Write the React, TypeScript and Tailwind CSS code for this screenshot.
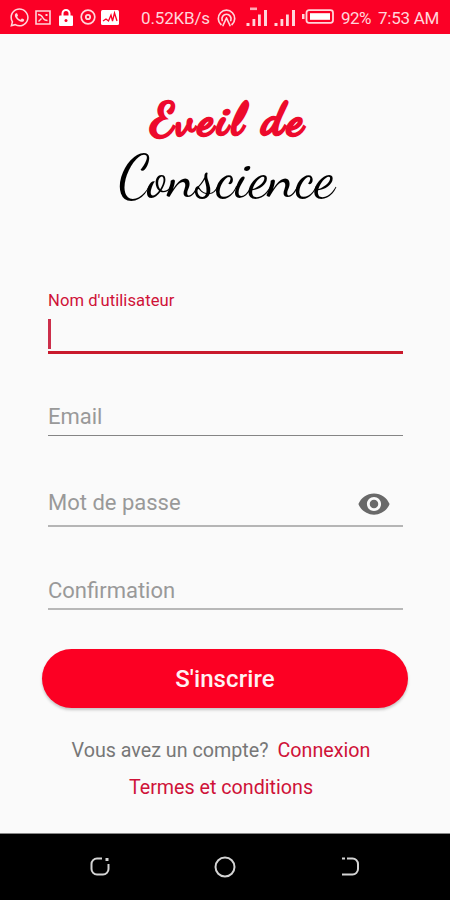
import { useState } from "react";
import { MdVisibility } from "react-icons/md";
import { FaWhatsapp } from "react-icons/fa";

const RED = "text-[#cf1238]";

function Signal({ label }: { label?: boolean }) {
  return (
    <svg width="22" height="20" viewBox="0 0 22 20" fill="currentColor">
      {label && <path d="M4 1.5h7v2.6H4z" opacity=".8" />}
      <path d="M.5 17h3v3h-3zM6.5 13h2.8v7H6.5zM12 8.5h2.8V20H12zM18 4h3v16h-3z" />
    </svg>
  );
}

function StatusBar() {
  return (
    <header className="flex h-[34px] shrink-0 items-center bg-[#fb0026] pl-[9px] text-[17px] text-[#ffd5da]">
      <FaWhatsapp className="size-[21px]" />
      <svg className="ml-[5px]" width="16" height="15" viewBox="0 0 16 15" fill="none" stroke="currentColor" strokeWidth="1.6">
        <path d="M1 1h14v13H1z" />
        <path d="M3 4.5c3.5 0 4 1.5 5 3.5s2 2.5 4.5 2.5M3.5 11.5l3-3" strokeWidth="1.4" />
        <path d="M10.5 4h2v2h-2z" fill="currentColor" stroke="none" />
      </svg>
      <svg className="ml-[8px] text-white" width="14" height="17" viewBox="0 0 14 17">
        <path d="M3.5 8V4.5a3.5 3.5 0 0 1 7 0V8" fill="none" stroke="currentColor" strokeWidth="2" />
        <rect y="6.5" width="14" height="10.5" rx="1" fill="currentColor" />
        <circle cx="7" cy="11.5" r="1.5" fill="#fb0026" />
      </svg>
      <svg className="ml-[7px]" width="16" height="16" viewBox="0 0 16 16" fill="none" stroke="currentColor">
        <circle cx="8" cy="8" r="6.8" strokeWidth="1.7" />
        <circle cx="8" cy="8" r="2.2" strokeWidth="1.8" />
      </svg>
      <svg className="ml-[5px] text-white" width="18" height="15" viewBox="0 0 18 15">
        <rect width="18" height="15" rx="1.5" fill="currentColor" />
        <path d="M2 11l3-2 2.5 2 2.5-6 1.5 6 2-8 2.5 8" fill="none" stroke="#fb0026" strokeWidth="1.3" />
      </svg>
      <span className="ml-[22px] w-[69px] whitespace-nowrap pt-[3px] tracking-[-0.15px]">0.52KB/s</span>
      <svg className="ml-[7px] mt-[2px]" width="19" height="18" viewBox="0 0 19 18" fill="none" stroke="currentColor" strokeWidth="1.7" strokeLinecap="round">
        <path d="M4 15.5a8.2 8.2 0 1 1 11 0" />
        <path d="M5.2 11.5a4.6 4.6 0 1 1 8.6 0" />
        <path d="M9.5 9l-3.5 7.5M9.5 9l3.5 7.5" strokeWidth="1.7" />
      </svg>
      <span className="ml-[10px] -mt-[2px]"><Signal label /></span>
      <span className="ml-[6px] -mt-[2px]"><Signal /></span>
      <svg className="ml-[6px] -mt-[1px]" width="32" height="15" viewBox="0 0 32 15">
        <path d="M0 5h2.5v5H0z" fill="currentColor" />
        <rect x="4.5" y="1.2" width="26.5" height="12.6" rx="2.5" fill="none" stroke="currentColor" strokeWidth="1.8" />
        <rect x="8" y="4.2" width="20" height="6.6" fill="#fff" />
      </svg>
      <span className="ml-[7px] w-[37px] whitespace-nowrap pt-[3px] tracking-[-0.5px]">92%</span>
      <span className="whitespace-nowrap pt-[3px] tracking-[-0.25px]">7:53 AM</span>
    </header>
  );
}

function Logo() {
  return (
    <h1 className="flex h-[125px] flex-col items-center font-['Dancing_Script',cursive]">
      <span className="mt-[10px] whitespace-nowrap pl-[7px] text-[45px] font-bold leading-[50px] tracking-[3.6px] text-[#ed0a2c] [-webkit-text-stroke:2.4px_#ed0a2c]">
        Eveil de
      </span>
      <span className="mt-[2px] whitespace-nowrap pl-[3px] text-[58.5px] leading-[60px] text-black">Conscience</span>
    </h1>
  );
}

export default function App() {
  const [form, setForm] = useState({ email: "", password: "", confirm: "" });
  const [visible, setVisible] = useState(false);

  const inputClass =
    "block h-[28px] w-full min-w-0 bg-transparent text-[22px] leading-[28px] text-[#333] outline-none placeholder:text-[#999]";

  return (
    <div className="flex h-[900px] w-[450px] flex-col overflow-hidden bg-[#fafafa] font-[Roboto,sans-serif]">
      <StatusBar />

      <main className="flex flex-1 flex-col pt-[51px]">
        <Logo />

        <form className="mt-[79px] flex flex-col pl-[48px] pr-[47px]" onSubmit={(e) => e.preventDefault()}>
          <label className={`h-[22px] text-[16.6px] leading-[23px] tracking-[0.05px] ${RED}`}>Nom d'utilisateur</label>
          <div className="flex h-[43px] border-b-[3px] border-[#c9192c] pt-[8px]">
            <span className="h-[30px] w-[3px] bg-[#cc2f4b]" />
          </div>

          <div className="mt-[49px] h-[33px] border-b-[1.5px] border-[#858585]">
            <input
              className={inputClass}
              placeholder="Email"
              value={form.email}
              onChange={(e) => setForm({ ...form, email: e.target.value })}
            />
          </div>

          <div className="mt-[53px] flex h-[38px] border-b-2 border-[#b5b5b5]">
            <input
              className={inputClass}
              type={visible ? "text" : "password"}
              placeholder="Mot de passe"
              value={form.password}
              onChange={(e) => setForm({ ...form, password: e.target.value })}
            />
            <button type="button" className="-mt-[2px] mr-[12px] h-[34px] shrink-0" onClick={() => setVisible(!visible)}>
              <MdVisibility className="size-[34px] text-[#696969]" />
            </button>
          </div>

          <div className="mt-[50px] h-[33px] border-b-2 border-[#b8b8b8]">
            <input
              className={inputClass}
              type="password"
              placeholder="Confirmation"
              value={form.confirm}
              onChange={(e) => setForm({ ...form, confirm: e.target.value })}
            />
          </div>

          <button className="-ml-[6px] -mr-[5px] mt-[39px] h-[59px] rounded-full bg-[#fc0023] text-[24px] font-medium tracking-[0.1px] text-[#fff0f2] shadow-[0_2px_3px_rgba(0,0,0,0.22)]">
            S'inscrire
          </button>
        </form>

        <div className="mt-[29px] flex justify-center gap-[9px] pr-[8px] text-[19.7px] leading-[28px]">
          <span className="text-[#777]">Vous avez un compte?</span>
          <a className={RED}>Connexion</a>
        </div>
        <a className={`mt-[9px] pr-[8px] text-center text-[19.7px] leading-[28px] ${RED}`}>Termes et conditions</a>
      </main>

      <nav className="flex h-[67px] shrink-0 items-center justify-between border-t border-[#888] bg-black px-[89px] text-[#d4d4d4]">
        <svg width="22" height="22" viewBox="0 0 22 22" fill="none" stroke="currentColor" strokeWidth="2">
          <path d="M13 2.5H8A5.5 5.5 0 0 0 2.5 8v5A5.5 5.5 0 0 0 8 18.5h6a5.5 5.5 0 0 0 5.5-5.5V8" />
          <path d="M16.5 3.5h3" strokeWidth="3" />
        </svg>
        <svg width="22" height="22" viewBox="0 0 22 22" fill="none" stroke="currentColor" strokeWidth="2">
          <circle cx="11" cy="11" r="9.5" />
        </svg>
        <svg width="22" height="22" viewBox="0 0 22 22" fill="none" stroke="currentColor" strokeWidth="2">
          <path d="M8 2.5h5.5A5.5 5.5 0 0 1 19 8v5a5.5 5.5 0 0 1-5.5 5.5H3M3 2.5h3" />
        </svg>
      </nav>
    </div>
  );
}
